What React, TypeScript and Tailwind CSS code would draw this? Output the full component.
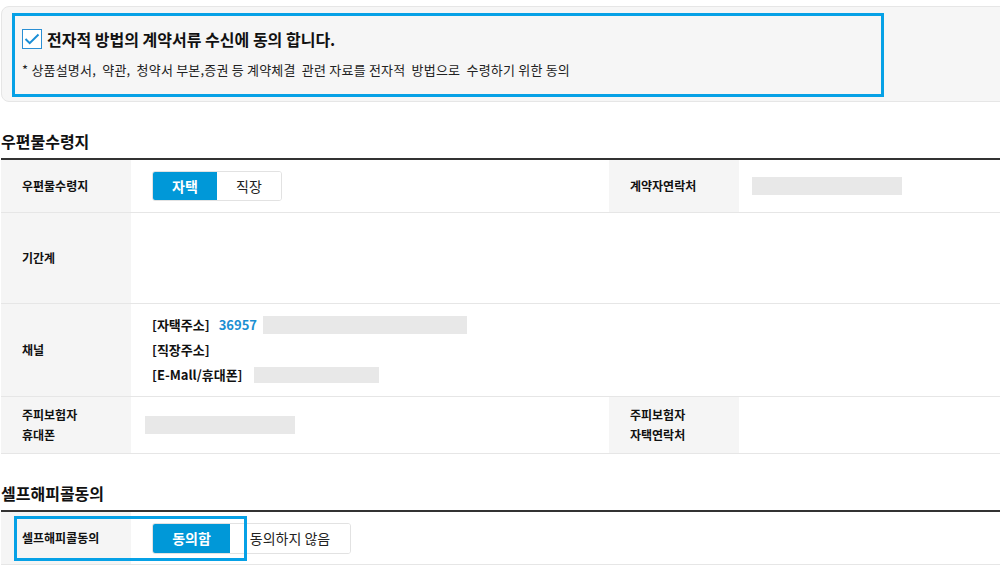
import React from 'react';

const Label: React.FC<{ children: React.ReactNode; className?: string }> = ({ children, className = '' }) => (
  <div
    className={`flex items-center border-b border-[#e6e6e6] bg-[#f5f5f5] pl-[21px] text-[12px] font-bold leading-[20px] text-[#111] ${className}`}
  >
    {children}
  </div>
);

const SectionTitle: React.FC<{ children: React.ReactNode }> = ({ children }) => (
  <h2 className="pl-[1px] text-[16px] font-bold leading-[20px] text-[#111]">{children}</h2>
);

export default function App() {
  return (
    <div className="h-[571px] w-[1000px] overflow-hidden bg-white font-['Noto_Sans_CJK_KR',sans-serif] text-[#111]">
      {/* 전자적 방법 동의 */}
      <div className="ml-[1px] mt-[6px] h-[96px] w-[1020px] rounded-[8px] border border-[#e6e6e6] bg-[#f6f6f6] pl-[10px] pt-[6px]">
        <div className="h-[84px] w-[872px] border-[3px] border-[#06a1e6] pl-[7px] pt-[13px]">
          <label className="flex items-center gap-[5px]">
            <span className="flex h-[20px] w-[20px] items-center justify-center border border-[#2a8fd4] bg-white">
              <svg width="18" height="18" viewBox="0 0 18 18" fill="none">
                <path d="M2.5 9l4.2 4.2L15.5 4.5" stroke="#1a8ed6" strokeWidth="2" />
              </svg>
            </span>
            <span className="text-[16px] font-bold leading-[20px] text-[#111]">전자적 방법의 계약서류 수신에 동의 합니다.</span>
          </label>
          <p className="mt-[13px] whitespace-pre text-[13px] leading-[16px] tracking-[0.2px] text-[#222]">
            {'* 상품설명서,  약관,  청약서 부본,증권 등 계약체결  관련 자료를 전자적  방법으로  수령하기 위한 동의'}
          </p>
        </div>
      </div>

      {/* 우편물수령지 */}
      <div className="mt-[29px]">
        <SectionTitle>우편물수령지</SectionTitle>
      </div>
      <div className="ml-[1px] mt-[7px] grid grid-cols-[130px_478px_130px_1fr] border-t-2 border-[#333]">
        {/* row 1 */}
        <Label className="h-[53px]">우편물수령지</Label>
        <div className="flex items-center border-b border-[#e6e6e6] pl-[21px]">
          <div className="flex h-[30px] overflow-hidden rounded-[3px] border border-[#e2e2e2] text-[14px]">
            <button className="w-[64px] bg-[#0098d8] font-bold text-white">자택</button>
            <button className="w-[64px] bg-white text-[#222]">직장</button>
          </div>
        </div>
        <Label className="pl-[20px]">계약자연락처</Label>
        <div className="flex items-center border-b border-[#e6e6e6] pl-[13px]">
          <span className="h-[18px] w-[150px] bg-[#e8e8e8]" />
        </div>

        {/* row 2 */}
        <Label className="h-[91px]">기간계</Label>
        <div className="col-span-3 border-b border-[#e6e6e6]" />

        {/* row 3 */}
        <Label className="h-[93px]">채널</Label>
        <div className="col-span-3 flex flex-col justify-center gap-[5px] border-b border-[#e6e6e6] pl-[21px] text-[13px] font-bold leading-[20px]">
          <div className="flex items-center">
            <span>[자택주소]</span>
            <span className="ml-[9px] text-[#1b8fd2]">36957</span>
            <span className="ml-[6px] h-[18px] w-[204px] bg-[#e8e8e8]" />
          </div>
          <div>[직장주소]</div>
          <div className="flex items-center">
            <span>[E-Mall/휴대폰]</span>
            <span className="ml-[11px] h-[16px] w-[125px] bg-[#e8e8e8]" />
          </div>
        </div>

        {/* row 4 */}
        <Label className="h-[57px]">
          주피보험자
          <br />
          휴대폰
        </Label>
        <div className="flex items-center border-b border-[#e6e6e6] pl-[14px]">
          <span className="h-[18px] w-[150px] bg-[#e8e8e8]" />
        </div>
        <Label className="pl-[20px]">
          주피보험자
          <br />
          자택연락처
        </Label>
        <div className="border-b border-[#e6e6e6]" />
      </div>

      {/* 셀프해피콜동의 */}
      <div className="mt-[29px]">
        <SectionTitle>셀프해피콜동의</SectionTitle>
      </div>
      <div className="relative ml-[1px] mt-[7px] grid grid-cols-[130px_1fr] border-t-2 border-[#333]">
        <Label className="h-[53px]">셀프해피콜동의</Label>
        <div className="flex items-center border-b border-[#e6e6e6] pl-[21px]">
          <div className="flex h-[31px] overflow-hidden rounded-[3px] border border-[#e2e2e2] text-[14px]">
            <button className="w-[77px] bg-[#0098d8] font-bold text-white">동의함</button>
            <button className="w-[120px] bg-white text-[#222]">동의하지 않음</button>
          </div>
        </div>
        <div className="pointer-events-none absolute left-[13px] top-[4px] h-[45px] w-[233px] border-[3px] border-[#06a1e6]" />
      </div>
    </div>
  );
}
